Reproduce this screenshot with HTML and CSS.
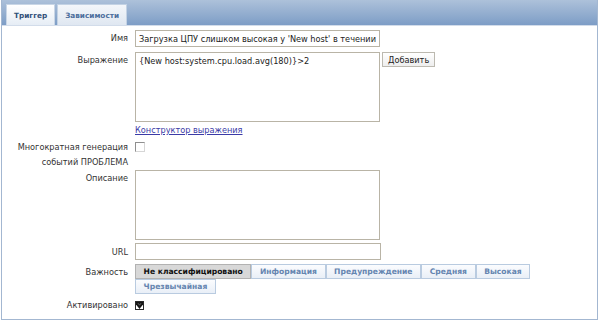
FILE: index.html
```html
<!DOCTYPE html>
<html>
<head>
<meta charset="utf-8">
<link rel="stylesheet" href="styles.css">
</head>
<body>
<div class="frame">
  <div class="tabbar">
    <div class="tab active">Триггер</div>
    <div class="tab">Зависимости</div>
  </div>
  <div class="form">
    <div class="label l-name">Имя</div>
    <div class="field f-name"><div class="input name">Загрузка ЦПУ слишком высокая у 'New host' в течении</div></div>

    <div class="label l-expr">Выражение</div>
    <div class="field f-expr">
      <div class="textarea expr">{New host:system.cpu.load.avg(180)}&gt;2</div>
      <div class="btn">Добавить</div>
    </div>

    <div class="label"></div>
    <div class="field f-link"><a class="link">Конструктор выражения</a></div>

    <div class="label l-multi">Многократная генерация<br>событий ПРОБЛЕМА</div>
    <div class="field"><div class="checkbox"></div></div>

    <div class="label l-desc">Описание</div>
    <div class="field f-desc"><div class="textarea desc"></div></div>

    <div class="label l-url">URL</div>
    <div class="field f-url"><div class="input url"></div></div>

    <div class="label l-sev">Важность</div>
    <div class="field sev">
      <div class="sevbtn selected">Не классифицировано</div>
      <div class="sevbtn">Информация</div>
      <div class="sevbtn">Предупреждение</div>
      <div class="sevbtn">Средняя</div>
      <div class="sevbtn">Высокая</div>
      <div class="sevbtn">Чрезвычайная</div>
    </div>

    <div class="label l-act">Активировано</div>
    <div class="field f-act"><div class="checkbox checked"><svg width="9" height="9" viewBox="0 0 9 9"><rect x="0.5" y="0.5" width="8" height="8" fill="#fff" stroke="#2a2a2a"/><path d="M1 1 H8 V3.5 L4.5 8 L1 3.5 Z" fill="#151515"/><path d="M3 2.2 L4.5 4.2 L6 2.2" fill="none" stroke="#777" stroke-width="0.8"/></svg></div></div>
  </div>
</div>
</body>
</html>
```
FILE: styles.css
```css
html, body { margin: 0; padding: 0; background: #fff; }
body { font-family: "DejaVu Sans", Verdana, sans-serif; font-size: 8.2px; color: #222; }
.frame {
  width: 595px; height: 319px; margin-left: 1px;
  border: 1px solid #a3b7d1; border-top: none;
}
.tabbar {
  height: 25px;
  background: linear-gradient(#adc1da, #7d9dc6);
  display: flex; align-items: flex-end; padding-left: 4px; gap: 2px;
  border-bottom: 1px solid #d2dcea;
}
.tab {
  height: 20px; line-height: 21px; padding: 0 7px;
  font-weight: bold; color: #4b6d9c; font-size: 7.3px;
  border: 1px solid #c3d2e4; border-bottom: none;
  background: linear-gradient(#f3f6fa, #dfe7f1);
}
.tab.active {
  color: #2f4f78; padding: 0 7px;
  background: linear-gradient(#ffffff, #e6edf5);
  border-color: #c9d6e6;
}
.form {
  display: grid; grid-template-columns: 126px 1fr;
  column-gap: 7px; padding-top: 4px;
}
.label { text-align: right; color: #333; }
.field { display: flex; align-items: flex-start; }
.input {
  width: 240px; height: 15px; border: 1px solid #b9b4a6; line-height: 16px;
  padding-left: 3px; white-space: nowrap; overflow: hidden; color: #222;
}
.l-name { line-height: 17px; }
.f-name { padding-bottom: 5px; }
.textarea {
  width: 240px; height: 68px; border: 1px solid #b9b4a6; padding-left: 3px; line-height: 17px;
}
.l-expr { line-height: 17px; }
.f-expr { gap: 2px; padding-bottom: 3px; }
.btn {
  height: 13px; line-height: 14px; padding: 0 5px; border: 1px solid #bcb9b0;
  background: linear-gradient(#ffffff, #eeeeee); color: #222;
}
.f-link { padding-bottom: 4px; height: 11px; }
.link { color: #3b3ba6; text-decoration: underline; line-height: 11px; }
.l-multi { line-height: 15px; }
.checkbox {
  width: 8px; height: 8px; border: 1px solid #8f8f8f; border-right-color: #d6d6d6; border-bottom-color: #d6d6d6;
  margin-top: 2px;
}
.checkbox.checked { border: none; width: 9px; height: 9px; margin-top: 3px; }
.checkbox svg { display: block; }
.l-desc { line-height: 17px; }
.f-desc { padding-bottom: 3px; }
.l-url { line-height: 19px; }
.f-url { padding-bottom: 4px; }
.url { width: 241px; }
.l-sev { line-height: 16px; }
.sev { flex-wrap: wrap; width: 400px; padding-bottom: 4px; }
.sevbtn {
  height: 13px; line-height: 14px; padding: 0 7.6px; font-weight: bold; color: #6585b0; font-size: 7.6px;
  border: 1px solid #b9cbe0; background: linear-gradient(#fbfcfe, #e9eff7);
}
.sevbtn.selected { color: #111; background: #d8d8d8; border-color: #b2b2b2; }
.l-act { line-height: 15px; }
```
